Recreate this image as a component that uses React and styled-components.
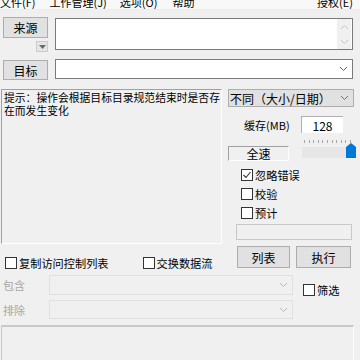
import React from "react";
import styled, { createGlobalStyle } from "styled-components";

const GlobalStyle = createGlobalStyle`
  body {
    margin: 0;
    font-family: "Noto Sans CJK SC", "Noto Sans", sans-serif;
  }
`;

const Window = styled.div`
  width: 360px;
  height: 360px;
  overflow: hidden;
  background: #f0f0f0;
  font-size: 11px;
  color: #000;
  display: flex;
  flex-direction: column;
`;

const MenuBar = styled.div`
  height: 9px;
  flex-shrink: 0;
  overflow: hidden;
  display: flex;
  background: #f8f8f8;
  padding-right: 7px;
  border-bottom: 1px solid #ececec;
`;

const MenuItem = styled.span`
  line-height: 14px;
  margin-top: -5px;
  margin-left: ${(p) => p.$gap || 0}px;
  margin-right: ${(p) => (p.$push ? "auto" : "0")};
  white-space: nowrap;
`;

const Top = styled.div`
  padding: 7px 7px 0 3px;
  display: flex;
  flex-direction: column;
  gap: 7px;
`;

const Row = styled.div`
  display: flex;
  gap: 7px;
  align-items: flex-start;
`;

const LeftCol = styled.div`
  width: 45px;
  display: flex;
  flex-direction: column;
  align-items: flex-end;
  gap: 3px;
`;

const Button = styled.div`
  box-sizing: border-box;
  width: ${(p) => p.$w || 45}px;
  height: ${(p) => p.$h || 21}px;
  margin-top: ${(p) => p.$top || 0}px;
  background: #e1e1e1;
  border: 1px solid #adadad;
  display: flex;
  align-items: center;
  justify-content: center;
  font-size: 12px;
  flex-shrink: 0;
`;

const DropButton = styled.div`
  box-sizing: border-box;
  width: 12px;
  height: 11px;
  background: #e5e5e5;
  border: 1px solid #cccccc;
  display: flex;
  align-items: center;
  justify-content: center;
`;

const SourceBox = styled.div`
  box-sizing: border-box;
  flex: 1;
  height: 32px;
  margin-top: 1px;
  border: 1px solid #7a7a7a;
  background: #fff;
  display: flex;
  justify-content: flex-end;
`;

const ScrollArrows = styled.div`
  width: 14px;
  margin-right: 1px;
  background: #f0f0f0;
  display: flex;
  flex-direction: column;
  justify-content: space-around;
  align-items: center;
`;

const Combo = styled.div`
  box-sizing: border-box;
  flex: ${(p) => (p.$fixed ? "none" : "1")};
  height: ${(p) => p.$h || 20}px;
  border: 1px solid ${(p) => p.$border || "#7a7a7a"};
  background: ${(p) => p.$bg || "#fff"};
  display: flex;
  align-items: center;
  justify-content: space-between;
  padding: 0 4px 0 1px;
  white-space: nowrap;
  font-size: 12px;
`;

const Middle = styled.div`
  margin-top: 9px;
  padding: 0 7px 0 1px;
  display: grid;
  grid-template-columns: 221px 1fr;
  column-gap: 6px;
`;

const HintBox = styled.div`
  box-sizing: border-box;
  height: 155px;
  border-top: 1px solid #a0a0a0;
  border-left: 1px solid #a0a0a0;
  border-right: 1px solid #fff;
  border-bottom: 1px solid #fff;
  padding: 1px 0 1px 2px;
  line-height: 13px;
  font-size: 10.8px;
`;

const CheckRow = styled.div`
  margin-top: 12px;
  padding-left: 4px;
  display: flex;
  gap: 34px;
`;

const Check = styled.label`
  display: flex;
  align-items: center;
  gap: 2px;
  height: 13px;
  font-size: 11.2px;
  white-space: nowrap;
`;

const Box = styled.span`
  box-sizing: border-box;
  width: 12px;
  height: 12px;
  border: 1px solid #333;
  background: #fff;
  display: flex;
  align-items: center;
  justify-content: center;
`;

const RightCol = styled.div`
  display: flex;
  flex-direction: column;
`;

const CacheRow = styled.div`
  margin-top: 9px;
  padding-left: 16px;
  display: flex;
  align-items: center;
`;

const CacheLabel = styled.span`
  width: 57px;
  font-size: 11px;
`;

const NumInput = styled.div`
  box-sizing: border-box;
  width: 42px;
  height: 17px;
  background: #fff;
  border-top: 1px solid #b0b0b0;
  border-left: 1px solid #b0b0b0;
  display: flex;
  align-items: center;
  justify-content: center;
  font-size: 12px;
`;

const SpeedRow = styled.div`
  margin-top: 7px;
  display: flex;
  gap: 13px;
  align-items: flex-start;
`;

const SpeedLabel = styled.div`
  box-sizing: border-box;
  width: 61px;
  height: 15px;
  margin-top: 6px;
  border-top: 1px solid #a0a0a0;
  border-left: 1px solid #a0a0a0;
  border-right: 1px solid #fff;
  border-bottom: 1px solid #fff;
  display: flex;
  align-items: center;
  justify-content: center;
  font-size: 12px;
`;

const Slider = styled.div`
  width: 54px;
  margin-right: -2px;
  display: flex;
  flex-direction: column;
  gap: 1px;
`;

const Ticks = styled.div`
  height: 3px;
  display: flex;
  justify-content: space-between;
  padding: 0 5px 0 2px;
`;

const Tick = styled.span`
  width: 1px;
  height: 3px;
  background: #a8a8a8;
`;

const Track = styled.div`
  height: 14px;
  display: flex;
  align-items: flex-end;
`;

const TrackFill = styled.div`
  flex: 1;
  height: 11px;
  background: #e6e6e6;
`;

const Options = styled.div`
  margin-top: 7px;
  padding-left: 13px;
  display: flex;
  flex-direction: column;
  gap: 6px;
`;

const Progress = styled.div`
  box-sizing: border-box;
  margin: 5px 2px 0 8px;
  height: 16px;
  border: 1px solid #c8c8c8;
`;

const ActionRow = styled.div`
  margin: 6px 0 0 9px;
  display: flex;
  gap: 6px;
`;

const Filters = styled.div`
  margin-top: 6px;
  padding-left: 3px;
  display: grid;
  grid-template-columns: 46px 244px auto;
  grid-template-rows: 20px 19px;
  row-gap: 5px;
  align-items: center;
`;

const FilterLabel = styled.span`
  color: #a8a8a8;
  font-size: 11px;
`;

const FilterCheck = styled.div`
  grid-row: 1 / span 2;
  grid-column: 3;
  align-self: start;
  margin: 8px 0 0 10px;
`;

const Bottom = styled.div`
  margin: 6px 6px 0 1px;
  flex: 1;
  border-top: 2px solid #c8c8c8;
  border-left: 1px solid #c8c8c8;
  border-right: 1px solid #fff;
`;

const Chevron = ({ color = "#606060", up }) => (
  <svg width="9" height="6" viewBox="0 0 9 6">
    <polyline
      points={up ? "1,5 4.5,1.5 8,5" : "1,1 4.5,4.5 8,1"}
      fill="none"
      stroke={color}
      strokeWidth="1"
    />
  </svg>
);

const CheckBox = ({ checked, children }) => (
  <Check>
    <Box>
      {checked && (
        <svg width="10" height="10" viewBox="0 0 10 10">
          <polyline points="1.5,5 4,7.5 8.5,2" fill="none" stroke="#333" strokeWidth="1.1" />
        </svg>
      )}
    </Box>
    {children}
  </Check>
);

export default function App() {
  return (
    <Window>
      <GlobalStyle />
      <MenuBar>
        <MenuItem>文件(F)</MenuItem>
        <MenuItem $gap={14}>工作管理(J)</MenuItem>
        <MenuItem $gap={13}>选项(O)</MenuItem>
        <MenuItem $gap={15} $push>帮助</MenuItem>
        <MenuItem>授权(E)</MenuItem>
      </MenuBar>

      <Top>
        <Row>
          <LeftCol>
            <Button>来源</Button>
            <DropButton>
              <svg width="7" height="4" viewBox="0 0 7 4">
                <polygon points="0,0 7,0 3.5,4" fill="#6a6a6a" />
              </svg>
            </DropButton>
          </LeftCol>
          <SourceBox>
            <ScrollArrows>
              <Chevron color="#c4c4c4" up />
              <Chevron color="#c4c4c4" />
            </ScrollArrows>
          </SourceBox>
        </Row>
        <Row>
          <Button $h={20} $top={1}>目标</Button>
          <Combo $h={20}>
            <span />
            <Chevron />
          </Combo>
        </Row>
      </Top>

      <Middle>
        <div>
          <HintBox>提示：操作会根据目标目录规范结束时是否存在而发生变化</HintBox>
          <CheckRow>
            <CheckBox>复制访问控制列表</CheckBox>
            <CheckBox>交换数据流</CheckBox>
          </CheckRow>
        </div>
        <RightCol>
          <Combo $h={18} $bg="#e1e1e1" $border="#adadad" $fixed>
            <span>不同（大小/日期）</span>
            <Chevron color="#707070" />
          </Combo>
          <CacheRow>
            <CacheLabel>缓存(MB)</CacheLabel>
            <NumInput>128</NumInput>
          </CacheRow>
          <SpeedRow>
            <SpeedLabel>全速</SpeedLabel>
            <Slider>
              <Ticks>
                {Array.from({ length: 11 }).map((_, i) => (
                  <Tick key={i} />
                ))}
              </Ticks>
              <Track>
                <TrackFill />
                <svg width="10" height="15" viewBox="0 0 10 15">
                  <polygon points="5,0 10,4 10,15 0,15 0,4" fill="#0078d7" />
                </svg>
              </Track>
            </Slider>
          </SpeedRow>
          <Options>
            <CheckBox checked>忽略错误</CheckBox>
            <CheckBox>校验</CheckBox>
            <CheckBox>预计</CheckBox>
          </Options>
          <Progress />
          <ActionRow>
            <Button $w={53} $h={22}>列表</Button>
            <Button $w={55} $h={22}>执行</Button>
          </ActionRow>
        </RightCol>
      </Middle>

      <Filters>
        <FilterLabel>包含</FilterLabel>
        <Combo $h={20} $bg="#f0f0f0" $border="#e0e0e0">
          <span />
          <Chevron color="#b8b8b8" />
        </Combo>
        <FilterCheck>
          <CheckBox>筛选</CheckBox>
        </FilterCheck>
        <FilterLabel>排除</FilterLabel>
        <Combo $h={19} $bg="#f0f0f0" $border="#e0e0e0">
          <span />
          <Chevron color="#b8b8b8" />
        </Combo>
      </Filters>

      <Bottom />
    </Window>
  );
}
